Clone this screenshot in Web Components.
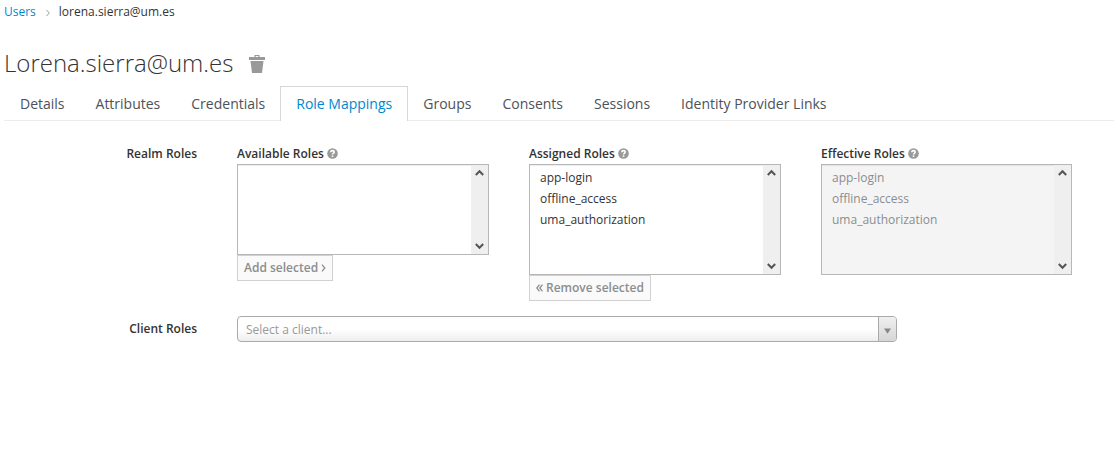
<!DOCTYPE html>
<html lang="en"><head><meta charset="utf-8"><title>User role mappings</title>
<style>html,body{margin:0;background:#fff}body{font:12px/20px "Open Sans",sans-serif;color:#333;overflow:hidden}</style>
</head><body>
<user-page></user-page>
<script>
const define=(name,html,setup)=>customElements.define(name,class extends HTMLElement{
  connectedCallback(){
    if(this.shadowRoot)return;
    const t=document.createElement('template');t.innerHTML=html;
    this.attachShadow({mode:'open'}).append(t.content.cloneNode(true));
    if(setup)setup(this,this.shadowRoot);
  }
});

define('bread-crumb',`<style>
:host{display:flex;height:24px;padding-left:4px;align-items:center;line-height:24px}
a{color:#0088ce}svg{margin:1px 9px 0 10px}
</style><a>Users</a><svg width="4" height="8" viewBox="0 0 4 8" fill="none" stroke="#9c9c9c"><path d="M.5 1 3.3 4 .5 7"/></svg><slot></slot>`);

define('page-title',`<style>
:host{display:flex;height:62px;padding-left:4px;box-sizing:border-box}
h1{margin:22px 0 0;font-size:24px;line-height:34px;font-weight:300;white-space:nowrap;width:245px}
svg{margin-top:31px}
</style><h1><slot></slot></h1><svg width="16" height="18" viewBox="0 0 16 18" fill="#999"><path fill-rule="evenodd" d="M5.5 0h5v2H16v3H0V2h5.5zM6.7 1v1h2.6V1z"/><path d="M1.5 6h13L13 18H3z"/></svg>`);

define('tab-item',`<style>
:host{display:block;box-sizing:border-box;height:35px;padding:7px 15px 0;margin-right:-1px;border:1px solid transparent;border-bottom:0;font-size:14px;line-height:20px;color:#4d5258;white-space:nowrap}
:host([active]){border-color:#d7d7d7;background:#fff;color:#0088ce}
</style><slot></slot>`);

define('tab-bar',`<style>
:host{display:flex;height:35px;margin-left:4px;background:linear-gradient(#ececec,#ececec) 0 34px/100% 1px no-repeat}
</style><slot></slot>`);

define('help-label',`<style>
:host{display:flex;height:20px;align-items:center;gap:3px;font-weight:600;white-space:nowrap}
svg{margin-bottom:1px}
</style><span><slot></slot></span><svg width="11" height="11" viewBox="0 0 11 11"><circle cx="5.5" cy="5.5" r="5.3" fill="#999"/><path d="M3.7 4.2C3.9 2 7.2 2.2 7.2 4c0 1.3-1.7 1.3-1.7 2.6" fill="none" stroke="#fff" stroke-width="1.6"/><path d="M4.7 7.4h1.6v1.5H4.7z" fill="#fff"/></svg>`);

define('role-list',`<style>
:host{display:flex;box-sizing:border-box;width:252px;height:111px;border:1px solid #b7b7b7;background:#fff;box-shadow:inset 0 1px 1px rgba(0,0,0,.075);font-size:12px}
:host([short]){height:91px}
:host([disabled]){width:251px;background:#f4f4f4;color:#8b8d8f}
.items{flex:1;padding:2px 10px;line-height:22px}
.bar{width:17px;background:#efefef;display:flex;flex-direction:column;justify-content:space-between;align-items:center;padding:4px 0;box-sizing:border-box}
</style><div class="items"><slot></slot></div><div class="bar">
<svg width="9" height="8" viewBox="0 0 9 8"><path d="M.8 6 4.5 2.2 8.2 6" fill="none" stroke="#555" stroke-width="2"/></svg>
<svg width="9" height="8" viewBox="0 0 9 8"><path d="M.8 2 4.5 5.8 8.2 2" fill="none" stroke="#555" stroke-width="2"/></svg></div>`);
define('role-item','<style>:host{display:block;height:21px}</style><slot></slot>');

define('role-button',`<style>
:host{display:flex;box-sizing:border-box;width:max-content;height:26px;border:1px solid #d1d1d1;background:#fafafa;color:#8b8d8f;font-weight:600;line-height:20px;padding:2px 6px;align-items:center;gap:3px}
svg{fill:none;stroke:#8b8d8f;stroke-width:1.3}
</style><span><slot></slot></span>`,(el,root)=>{
  const back=el.hasAttribute('back');
  const t=document.createElement('template');
  t.innerHTML=back?'<svg width="7" height="8" viewBox="0 0 7 8"><path d="M3.5.7.8 4l2.7 3.3M6.5.7 3.8 4l2.7 3.3"/></svg>':'<svg width="5" height="8" viewBox="0 0 5 8"><path d="M1 .7 3.8 4 1 7.3"/></svg>';
  back?root.querySelector('span').before(t.content):root.append(t.content);
});

define('client-select',`<style>
:host{display:flex;box-sizing:border-box;width:660px;height:26px;border:1px solid #aaa;border-radius:4px;background:linear-gradient(#fff 50%,#eee);overflow:hidden;color:#999;line-height:25px}
span{flex:1;padding-left:8px}
i{width:18px;box-sizing:border-box;border-left:1px solid #aaa;background:linear-gradient(#f0f0f0,#d6d6d6);display:flex;align-items:center;justify-content:center}
svg{margin-top:3px}
</style><span><slot></slot></span><i><svg width="7" height="6" viewBox="0 0 7 6"><path d="M0 .5h7L3.5 5.7z" fill="#888"/></svg></i>`);

define('user-page',`<style>
:host{display:block;width:1114px;height:469px}
.row{display:grid;grid-template-columns:197px 1fr;column-gap:40px}
.label{text-align:right;font-weight:600}
.realm{padding-top:23px;height:172px}
.cols{display:flex;gap:40px}
.client .label{padding-top:3px}
</style>
<bread-crumb>lorena.sierra@um.es</bread-crumb>
<page-title>Lorena.sierra@um.es</page-title>
<tab-bar><tab-item>Details</tab-item><tab-item>Attributes</tab-item><tab-item>Credentials</tab-item><tab-item active>Role Mappings</tab-item><tab-item>Groups</tab-item><tab-item>Consents</tab-item><tab-item>Sessions</tab-item><tab-item>Identity Provider Links</tab-item></tab-bar>
<div class="row realm"><div class="label">Realm Roles</div><div class="cols">
<div><help-label>Available Roles</help-label><role-list short></role-list><role-button>Add selected</role-button></div>
<div><help-label>Assigned Roles</help-label><role-list><role-item>app-login</role-item><role-item>offline_access</role-item><role-item>uma_authorization</role-item></role-list><role-button back>Remove selected</role-button></div>
<div><help-label>Effective Roles</help-label><role-list disabled><role-item>app-login</role-item><role-item>offline_access</role-item><role-item>uma_authorization</role-item></role-list></div>
</div></div>
<div class="row client"><div class="label">Client Roles</div><client-select>Select a client...</client-select></div>`);
</script></body></html>
